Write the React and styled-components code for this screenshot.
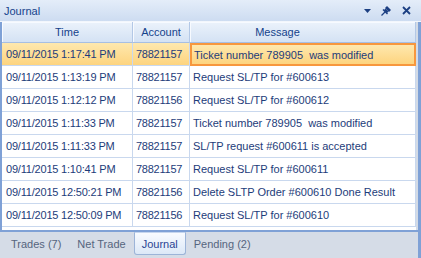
import React from "react";
import styled, { createGlobalStyle } from "styled-components";

const Global = createGlobalStyle`
  html, body { margin: 0; padding: 0; }
  body {
    width: 421px;
    height: 258px;
    overflow: hidden;
    font-family: "Liberation Sans", Arial, sans-serif;
    font-size: 11px;
  }
`;

const Window = styled.div`
  width: 421px;
  height: 258px;
  display: flex;
  flex-direction: column;
  background: #7fa1d6;
`;

const TitleBar = styled.div`
  height: 21px;
  flex: none;
  display: flex;
  align-items: center;
  padding-left: 4px;
  background: linear-gradient(#e4edf9, #cddcf1);
  border-bottom: 1px solid #f2f6fc;
  color: #15428b;
`;

const Title = styled.span`
  flex: 1;
`;

const TitleButtons = styled.div`
  display: flex;
  align-items: center;
  padding-right: 6px;
`;

const TitleButton = styled.span`
  width: ${(p) => p.$w}px;
  height: 14px;
  display: flex;
  align-items: center;
  justify-content: center;
`;

const Body = styled.div`
  flex: 1;
  display: flex;
  padding: 0 3px 2px 2px;
  min-height: 0;
`;

const Grid = styled.div`
  flex: 1;
  background: #fff;
  border-right: 2px solid #d3dbe6;
  display: grid;
  grid-template-columns: 131px 57px 1fr;
  grid-auto-rows: 23px;
  grid-template-rows: 21px;
  align-content: start;
`;

const HeadCell = styled.div`
  display: flex;
  align-items: center;
  justify-content: center;
  padding-right: ${(p) => p.$shift || 0}px;
  background: linear-gradient(#ebf2fb, #d4e2f4);
  border-right: 1px solid #b3c8e6;
  border-bottom: 1px solid #a7bfe2;
  box-shadow: inset 1px 1px 0 #f7faff;
  color: #15428b;
`;

const Cell = styled.div`
  display: flex;
  align-items: center;
  padding-left: ${(p) => p.$pad}px;
  white-space: pre;
  overflow: hidden;
  letter-spacing: ${(p) => p.$tight || 0}px;
  color: #1d3c7a;
  border-right: 1px solid #c9d8ee;
  border-bottom: 1px solid #c9d8ee;
  background: ${(p) =>
    p.$selected ? "linear-gradient(#fee8ae, #fdd47f)" : "#fff"};
  ${(p) =>
    p.$focused &&
    `
    border: 2px solid #f7973d;
    padding-left: ${p.$pad - 1}px;
  `}
`;

const TabStrip = styled.div`
  height: 26px;
  flex: none;
  display: flex;
  align-items: flex-start;
  padding-left: 3px;
  background: #d5dce7;
  border-right: 3px solid #7fa1d6;
`;

const Tab = styled.div`
  height: 23px;
  box-sizing: border-box;
  display: flex;
  align-items: center;
  padding: 0 ${(p) => (p.$active ? 7 : 8)}px;
  color: ${(p) => (p.$active ? "#2b4593" : "#56657e")};
  ${(p) =>
    p.$active &&
    `
    background: linear-gradient(#f8fbff, #dce8f7);
    border: 1px solid #9cb4d8;
    border-top-color: #c6d6ee;
    border-radius: 0 0 3px 3px;
  `}
`;

const Pin = () => (
  <svg width="12" height="12" viewBox="0 0 12 12">
    <polygon points="7,1 11,5 9,7 5,3" fill="#1c3f82" />
    <polygon points="5.5,3.5 8.5,6.5 6.8,8.2 3.8,5.2" fill="#1c3f82" />
    <line x1="3" y1="4.5" x2="7.5" y2="9" stroke="#1c3f82" strokeWidth="1.4" />
    <line x1="5" y1="7" x2="1.5" y2="10.5" stroke="#1c3f82" strokeWidth="1.3" />
  </svg>
);

const Close = () => (
  <svg width="9" height="9" viewBox="0 0 9 9">
    <path d="M1 1 L8 8 M8 1 L1 8" stroke="#1c3f82" strokeWidth="1.8" />
  </svg>
);

const Down = () => (
  <svg width="7" height="4" viewBox="0 0 7 4">
    <polygon points="0,0 7,0 3.5,4" fill="#1c3f82" />
  </svg>
);

const rows = [
  ["09/11/2015 1:17:41 PM", "78821157", "Ticket number 789905  was modified"],
  ["09/11/2015 1:13:19 PM", "78821157", "Request SL/TP for #600613"],
  ["09/11/2015 1:12:12 PM", "78821156", "Request SL/TP for #600612"],
  ["09/11/2015 1:11:33 PM", "78821157", "Ticket number 789905  was modified"],
  ["09/11/2015 1:11:33 PM", "78821157", "SL/TP request #600611 is accepted"],
  ["09/11/2015 1:10:41 PM", "78821157", "Request SL/TP for #600611"],
  ["09/11/2015 12:50:21 PM", "78821156", "Delete SLTP Order #600610 Done Result"],
  ["09/11/2015 12:50:09 PM", "78821156", "Request SL/TP for #600610"],
];

const tabs = [
  { label: "Trades (7)" },
  { label: "Net Trade" },
  { label: "Journal", active: true },
  { label: "Pending (2)" },
];

export default function App() {
  return (
    <>
      <Global />
      <Window>
        <TitleBar>
          <Title>Journal</Title>
          <TitleButtons>
            <TitleButton $w={16}>
              <Down />
            </TitleButton>
            <TitleButton $w={22}>
              <Pin />
            </TitleButton>
            <TitleButton $w={18}>
              <Close />
            </TitleButton>
          </TitleButtons>
        </TitleBar>
        <Body>
          <Grid>
            <HeadCell>Time</HeadCell>
            <HeadCell>Account</HeadCell>
            <HeadCell $shift={50}>Message</HeadCell>
            {rows.map((r, i) => (
              <React.Fragment key={i}>
                <Cell $pad={4} $tight={-0.2} $selected={i === 0}>
                  {r[0]}
                </Cell>
                <Cell $pad={3} $tight={-0.25} $selected={i === 0}>
                  {r[1]}
                </Cell>
                <Cell $pad={3} $selected={i === 0} $focused={i === 0}>
                  {r[2]}
                </Cell>
              </React.Fragment>
            ))}
          </Grid>
        </Body>
        <TabStrip>
          {tabs.map((t) => (
            <Tab key={t.label} $active={t.active}>
              {t.label}
            </Tab>
          ))}
        </TabStrip>
      </Window>
    </>
  );
}
